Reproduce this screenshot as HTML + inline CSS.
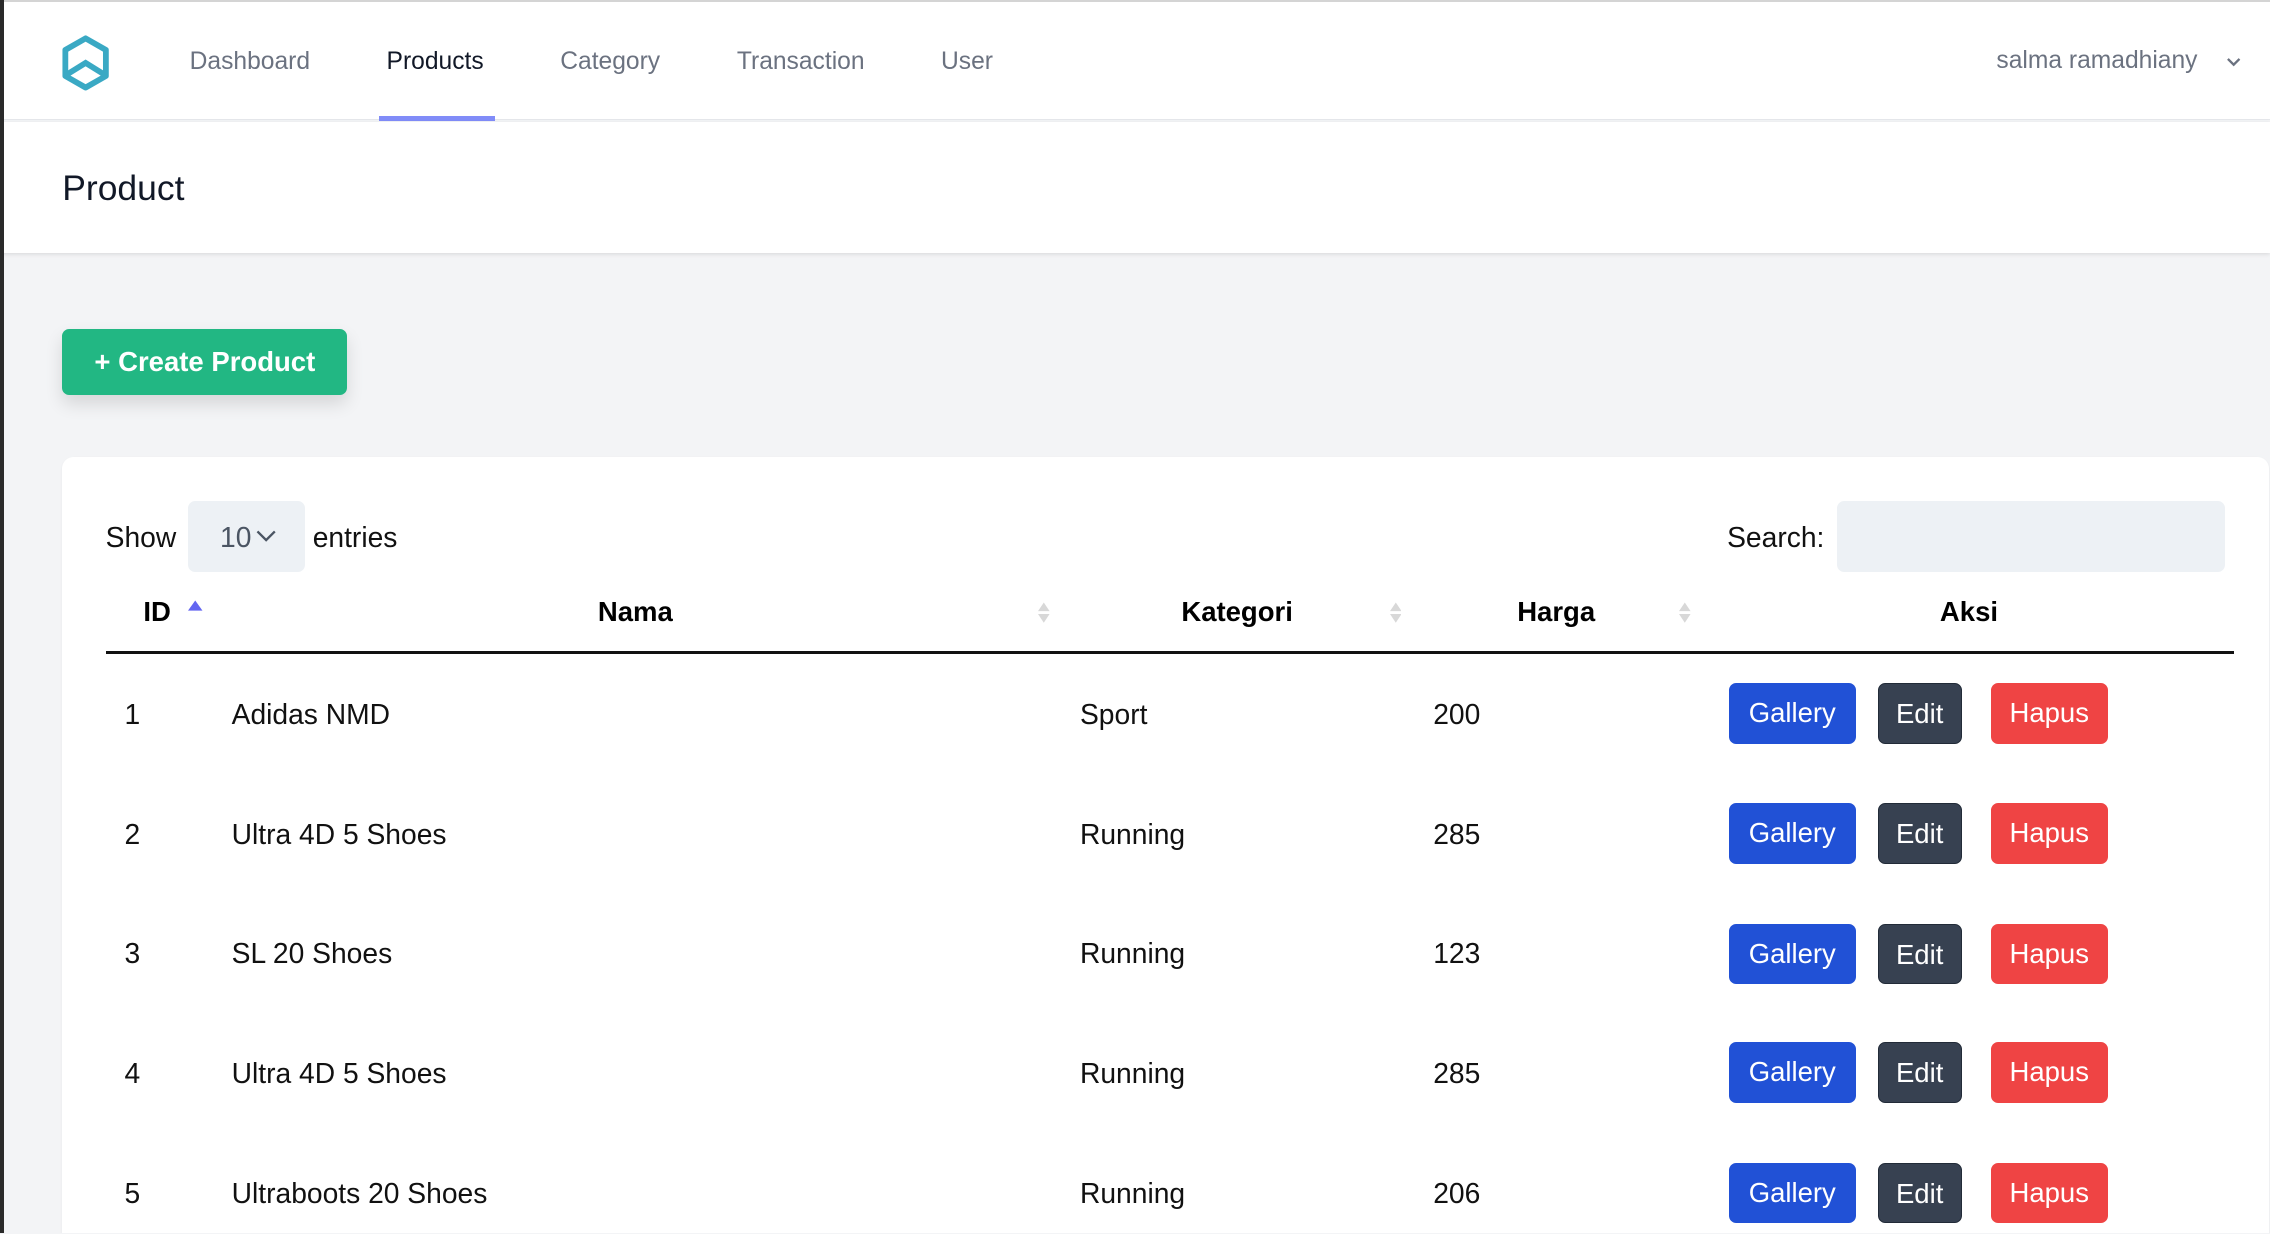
<!DOCTYPE html>
<html><head><meta charset="utf-8"><style>
html,body{margin:0;padding:0;width:2270px;height:1234px;overflow:hidden;background:#f3f4f6}
#w{zoom:1.44771;width:1568px;height:852px;position:relative;font-family:"Liberation Sans",sans-serif;color:#111827;overflow:hidden}
.a{position:absolute;white-space:nowrap}
.nav{position:absolute;left:0;top:0;width:1568px;height:83px;background:#fff;border-bottom:1px solid #e5e7eb;border-top:2px solid #d4d4d4;box-sizing:border-box}
.nl{position:absolute;top:32px;font-size:17px;color:#6b7280}
.hdr{position:absolute;left:0;top:84px;width:1568px;height:91px;background:#fff;box-shadow:0 1px 3px rgba(0,0,0,.12)}
.btn{position:absolute;height:42px;border-radius:5px;color:#fff;font-size:19px;line-height:42px;text-align:center}
.g{background:#2151d6;width:88px;left:1194px}
.e{background:#374151;width:58px;left:1297px;border:1px solid #222b38;box-sizing:border-box}
.h{background:#ef4444;width:81px;left:1375px}
.td{position:absolute;font-size:19.5px;color:#111}
.th{position:absolute;top:412px;font-size:19px;font-weight:bold;color:#000}
.sort{position:absolute;top:415px;width:8px;height:16px}
</style></head><body><div id="w">
<div class="a" style="left:0;top:0;width:3px;height:852px;background:#2a2a2a;z-index:5"></div>
<div class="nav">
<svg class="a" style="left:42px;top:22px" width="34" height="40" viewBox="0 0 34 40"><path d="M17 3 L31 11 L31 29 L17 37 L3 29 L3 11 Z" fill="none" stroke="#3aa9c4" stroke-width="4" stroke-linejoin="round"/><path d="M4 28 L17 20 L30 28" fill="none" stroke="#3aa9c4" stroke-width="4"/></svg>
<div class="nl a" style="left:131px">Dashboard</div>
<div class="nl a" style="left:267px;color:#111827">Products</div>
<div class="nl a" style="left:387px">Category</div>
<div class="nl a" style="left:509px">Transaction</div>
<div class="nl a" style="left:650px">User</div>
<div class="a" style="left:262px;top:79px;width:80px;height:3px;background:#818cf8"></div>
<div class="nl a" style="left:1379px;top:31px">salma ramadhiany</div>
<svg class="a" style="left:1537px;top:37px" width="12" height="8" viewBox="0 0 12 8"><path d="M2 2 L6 6 L10 2" fill="none" stroke="#6b7280" stroke-width="1.6"/></svg>
</div>
<div class="hdr"><div class="a" style="left:43px;top:32px;font-size:24.5px;color:#111827">Product</div></div>
<div class="btn" style="left:43px;top:227px;width:197px;height:46px;line-height:46px;background:#22b783;font-weight:600;font-size:19px;box-shadow:0 6px 12px rgba(0,0,0,.12)">+ Create Product</div>
<div class="a" style="left:43px;top:316px;width:1524px;height:560px;background:#fff;border-radius:8px;box-shadow:0 1px 2px rgba(0,0,0,.05)"></div>
<div class="td" style="left:73px;top:360px">Show</div>
<div class="a" style="left:130px;top:346px;width:81px;height:49px;background:#edf1f5;border-radius:5px"></div>
<div class="td" style="left:152px;top:360px;color:#4b5563">10</div>
<svg class="a" style="left:177px;top:366px" width="14" height="9" viewBox="0 0 14 9"><path d="M1 1 L7 7 L13 1" fill="none" stroke="#4b5563" stroke-width="1.6"/></svg>
<div class="td" style="left:216px;top:360px">entries</div>
<div class="td" style="left:1193px;top:360px">Search:</div>
<div class="a" style="left:1269px;top:346px;width:268px;height:49px;background:#edf1f5;border-radius:5px"></div>
<div class="th" style="left:99px">ID</div>
<svg class="a" style="left:130px;top:414px" width="10" height="8"><path d="M0 8 L5 1 L10 8Z" fill="#6366f1"/></svg>
<div class="th" style="left:413px">Nama</div>
<div class="th" style="left:816px">Kategori</div>
<div class="th" style="left:1048px">Harga</div>
<div class="th" style="left:1340px">Aksi</div>
<svg class="sort" style="left:717px" viewBox="0 0 8 16"><path d="M0 7 L4 1 L8 7Z M0 9 L4 15 L8 9Z" fill="#d8d8d8"/></svg>
<svg class="sort" style="left:960px" viewBox="0 0 8 16"><path d="M0 7 L4 1 L8 7Z M0 9 L4 15 L8 9Z" fill="#d8d8d8"/></svg>
<svg class="sort" style="left:1160px" viewBox="0 0 8 16"><path d="M0 7 L4 1 L8 7Z M0 9 L4 15 L8 9Z" fill="#d8d8d8"/></svg>
<div class="a" style="left:73px;top:450px;width:1470px;height:2px;background:#111"></div>

<div class="td" style="left:86px;top:482px">1</div><div class="td" style="left:160px;top:482px">Adidas NMD</div><div class="td" style="left:746px;top:482px">Sport</div><div class="td" style="left:990px;top:482px">200</div>
<div class="btn g" style="top:472px">Gallery</div><div class="btn e" style="top:472px">Edit</div><div class="btn h" style="top:472px">Hapus</div>

<div class="td" style="left:86px;top:565px">2</div><div class="td" style="left:160px;top:565px">Ultra 4D 5 Shoes</div><div class="td" style="left:746px;top:565px">Running</div><div class="td" style="left:990px;top:565px">285</div>
<div class="btn g" style="top:555px">Gallery</div><div class="btn e" style="top:555px">Edit</div><div class="btn h" style="top:555px">Hapus</div>

<div class="td" style="left:86px;top:647px">3</div><div class="td" style="left:160px;top:647px">SL 20 Shoes</div><div class="td" style="left:746px;top:647px">Running</div><div class="td" style="left:990px;top:647px">123</div>
<div class="btn g" style="top:638px">Gallery</div><div class="btn e" style="top:638px">Edit</div><div class="btn h" style="top:638px">Hapus</div>

<div class="td" style="left:86px;top:730px">4</div><div class="td" style="left:160px;top:730px">Ultra 4D 5 Shoes</div><div class="td" style="left:746px;top:730px">Running</div><div class="td" style="left:990px;top:730px">285</div>
<div class="btn g" style="top:720px">Gallery</div><div class="btn e" style="top:720px">Edit</div><div class="btn h" style="top:720px">Hapus</div>

<div class="td" style="left:86px;top:813px">5</div><div class="td" style="left:160px;top:813px">Ultraboots 20 Shoes</div><div class="td" style="left:746px;top:813px">Running</div><div class="td" style="left:990px;top:813px">206</div>
<div class="btn g" style="top:803px">Gallery</div><div class="btn e" style="top:803px">Edit</div><div class="btn h" style="top:803px">Hapus</div>
</div></body></html>
